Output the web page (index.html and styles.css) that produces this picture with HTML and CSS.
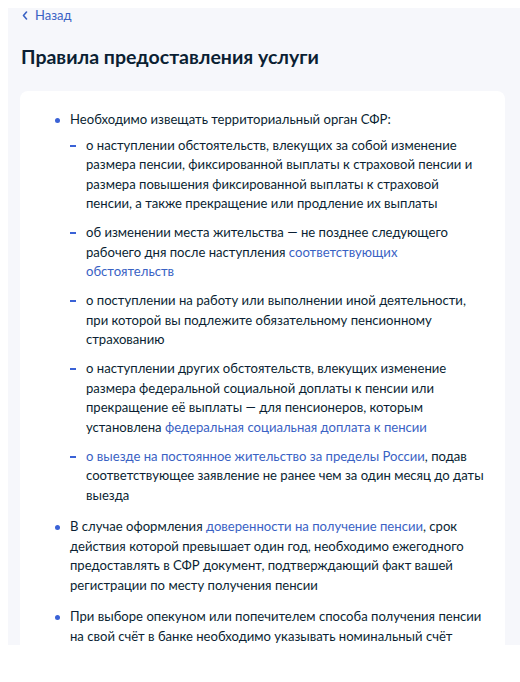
FILE: index.html
```html
<!DOCTYPE html>
<html lang="ru">
<head>
<meta charset="utf-8">
<title>Правила предоставления услуги</title>
<link rel="stylesheet" href="styles.css">
</head>
<body>
<div class="page">
  <a class="back" href="#">
    <svg class="chev" width="6" height="9" viewBox="0 0 6 9"><polyline points="4.5,1 1.5,4.5 4.5,8" fill="none" stroke="#3a62c4" stroke-width="1.6" stroke-linecap="round" stroke-linejoin="round"/></svg>
    <span>Назад</span>
  </a>
  <h1 class="title">Правила предоставления услуги</h1>
  <div class="card">
    <ul class="bullets">
      <li>Необходимо извещать территориальный орган СФР:
        <ul class="dashes">
          <li>о наступлении обстоятельств, влекущих за собой изменение размера пенсии, фиксированной выплаты к страховой пенсии и размера повышения фиксированной выплаты к страховой пенсии, а также прекращение или продление их выплаты</li>
          <li>об изменении места жительства — не позднее следующего рабочего дня после наступления <a class="link" href="#">соответствующих обстоятельств</a></li>
          <li>о поступлении на работу или выполнении иной деятельности, при которой вы подлежите обязательному пенсионному страхованию</li>
          <li>о наступлении других обстоятельств, влекущих изменение размера федеральной социальной доплаты к пенсии или прекращение её выплаты — для пенсионеров, которым установлена <a class="link" href="#">федеральная социальная доплата к пенсии</a></li>
          <li><a class="link" href="#">о выезде на постоянное жительство за пределы России</a>, подав соответствующее заявление не ранее чем за один месяц до даты выезда</li>
        </ul>
      </li>
      <li>В случае оформления <a class="link" href="#">доверенности на получение пенсии</a>, срок действия которой превышает один год, необходимо ежегодного предоставлять в СФР документ, подтверждающий факт вашей регистрации по месту получения пенсии</li>
      <li>При выборе опекуном или попечителем способа получения пенсии на свой счёт в банке необходимо указывать номинальный счёт опекуна или попечителя</li>
    </ul>
  </div>
</div>
</body>
</html>
```
FILE: styles.css
```css
html, body {
  margin: 0;
  padding: 0;
  background: #ffffff;
}
body {
  padding: 8px 0 0 8px;
  font-family: Lato, "Noto Sans", sans-serif;
  color: #0b1f33;
}
.page {
  box-sizing: border-box;
  height: 637px;
  background: #f6f7fb;
  padding: 0 15px 0 12px;
  overflow: hidden;
}
.back {
  display: flex;
  align-items: center;
  gap: 7px;
  padding-left: 2px;
  font-size: 13px;
  line-height: 14px;
  color: #3a62c4;
  text-decoration: none;
}
.chev {
  display: block;
}
.title {
  margin: 23px 0 0 1px;
  font-size: 19.5px;
  line-height: 24px;
  font-weight: 700;
  color: #0b1f33;
}
.card {
  margin-top: 22px;
  background: #ffffff;
  border-radius: 8px 8px 0 0;
  padding: 19px 18px 0 34px;
  min-height: 600px;
}
.bullets {
  list-style: none;
  margin: 0;
  padding: 0;
  font-size: 13.1px;
  line-height: 19.5px;
}
.bullets > li {
  position: relative;
  padding-left: 16px;
  margin-bottom: 12px;
}
.bullets > li::before {
  content: "";
  position: absolute;
  left: 1px;
  top: 7.5px;
  width: 5px;
  height: 5px;
  border-radius: 50%;
  background: #3a62d6;
}
.dashes {
  list-style: none;
  margin: 6px 0 0 0;
  padding: 0;
}
.dashes > li {
  position: relative;
  padding-left: 16px;
  margin-bottom: 9.5px;
}
.dashes > li:last-child {
  margin-bottom: 0;
}
.dashes > li::before {
  content: "";
  position: absolute;
  left: 0;
  top: 9px;
  width: 6px;
  height: 2px;
  background: #3a62d6;
}
.link {
  color: #3a62c4;
  text-decoration: none;
}
```
